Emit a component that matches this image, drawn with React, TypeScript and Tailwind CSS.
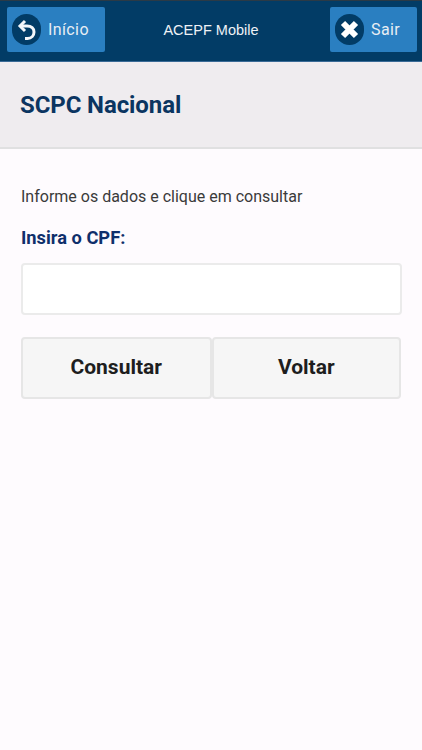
import { FunctionComponent } from "react";

const HeaderButton: FunctionComponent<{ label: string; width: string; icon: "back" | "close" }> = ({ label, width, icon }) => {
    return (
        <button className={`${width} h-[45px] flex items-center pl-[5px] gap-[7px] bg-[#2a7fc1] rounded-[2px] text-[#e8eef4] text-[16px] tracking-[0.4px]`}>
            <span className="w-[29px] h-[31px] rounded-full bg-[#023c66] flex items-center justify-center shrink-0">
                {icon === "back" ? (
                    <svg width="20" height="22" viewBox="0 0 20 22" fill="none" stroke="#f4f7fa" strokeWidth="3">
                        <path d="M8 2 L3 7 L8 12" />
                        <path d="M3 7 H10 C14.5 7 17 9.5 17 13 C17 16.5 14.5 19.5 10.5 19.5 H8" />
                    </svg>
                ) : (
                    <svg width="21" height="21" viewBox="0 0 21 21" fill="none" stroke="#ffffff" strokeWidth="6">
                        <path d="M4 4 L17 17 M17 4 L4 17" />
                    </svg>
                )}
            </span>
            <span>{label}</span>
        </button>
    );
};

const App: FunctionComponent = () => {
    return (
        <div className="w-[422px] h-[750px] bg-[#fefbfe] font-['Roboto',sans-serif] overflow-hidden flex flex-col">
            <div className="h-[62px] bg-[#023c66] border-t border-[#2b3a46] border-b border-b-[#3a6a96] flex items-start justify-between pt-[6px] pl-[7px] pr-[5px] shrink-0">
                <HeaderButton label="Início" width="w-[98px]" icon="back" />
                <span className="font-['Liberation_Sans',sans-serif] text-[14.5px] leading-[20px] text-[#eef2f6] pt-[13px] pr-[13px]">ACEPF Mobile</span>
                <HeaderButton label="Sair" width="w-[87px]" icon="close" />
            </div>

            <div className="h-[87px] bg-[#efecef] border-b-2 border-[#e0e0e1] flex items-center pl-[20px] shrink-0">
                <h1 className="text-[24px] font-bold tracking-[-0.1px] text-[#0b3561]">SCPC Nacional</h1>
            </div>

            <div className="px-[21px] pt-[38px]">
                <p className="text-[16px] leading-[20px] text-[#3a3a3a]">Informe os dados e clique em consultar</p>
                <label className="block mt-[20px] text-[18.3px] leading-[22px] font-bold text-[#0f2f6b]">Insira o CPF:</label>
                <input type="text" className="block mt-[14px] w-[381px] h-[52px] bg-white border-2 border-[#ebebeb] rounded-[4px] outline-none" />
                <div className="mt-[22px] flex gap-0">
                    <button className="w-[191px] h-[62px] bg-[#f6f6f6] border-2 border-[#e6e6e6] rounded-[4px] text-[21px] font-bold text-[#1e1e1e]">Consultar</button>
                    <button className="w-[190px] h-[62px] bg-[#f6f6f6] border-2 border-[#e6e6e6] rounded-[4px] text-[21px] font-bold text-[#1e1e1e]">Voltar</button>
                </div>
            </div>
        </div>
    );
};

export default App;
